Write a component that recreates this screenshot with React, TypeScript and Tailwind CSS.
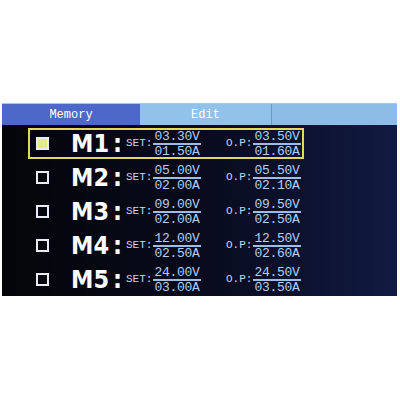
const ROWS = [
  { name: "M1", setV: "03.30V", setA: "01.50A", opV: "03.50V", opA: "01.60A", active: true },
  { name: "M2", setV: "05.00V", setA: "02.00A", opV: "05.50V", opA: "02.10A" },
  { name: "M3", setV: "09.00V", setA: "02.00A", opV: "09.50V", opA: "02.50A" },
  { name: "M4", setV: "12.00V", setA: "02.50A", opV: "12.50V", opA: "02.60A" },
  { name: "M5", setV: "24.00V", setA: "03.00A", opV: "24.50V", opA: "03.50A" },
];

const mono = { fontFamily: '"Liberation Mono", "DejaVu Sans Mono", monospace' };

function Fraction({ top, bottom }: { top: string; bottom: string }) {
  return (
    <div
      className="ml-[1px] flex w-[48px] flex-col items-center text-[13px] leading-[11px] tracking-[-0.3px] text-[#b4cef2]"
      style={mono}
    >
      <span>{top}</span>
      <span className="my-[1px] h-[2px] w-full bg-[#9dbce8]" />
      <span>{bottom}</span>
    </div>
  );
}

export default function App() {
  return (
    <div className="h-[400px] w-[400px] bg-white pt-[103px] pl-[2px]">
      <div className="flex h-[193px] w-[395px] flex-col bg-gradient-to-r from-[#040509] via-[#080b1c] to-[#111a42]">
        {/* tabs */}
        <div className="flex h-[22px] border-t border-[#a9c6ec] text-[12px] text-white" style={mono}>
          <div className="flex w-[138px] items-center justify-center bg-[#4d68c8]">Memory</div>
          <div className="flex w-[131px] items-center justify-center bg-[#92c2ea]">Edit</div>
          <div className="w-[1px] bg-[#6f98c8]" />
          <div className="flex-1 bg-[#8dbce6]" />
        </div>

        <div className="flex flex-col gap-[3px] pt-[3px] pl-[26px]">
          {ROWS.map((r) => (
            <div
              key={r.name}
              className={`flex h-[31px] w-[276px] items-center border-2 pl-[6px] ${r.active ? "border-[#dcdc5a]" : "border-transparent"}`}
            >
              <span
                className={`h-[13px] w-[13px] shrink-0 border-2 border-[#e8ecf8] ${r.active ? "bg-[#e4ec86]" : ""}`}
              />
              <span
                className="ml-[22px] w-[55px] shrink-0 text-[25px] leading-none font-bold text-white"
                style={{ fontFamily: '"DejaVu Sans Condensed", "DejaVu Sans", sans-serif', fontStretch: "condensed" }}
              >
                {r.name}
                <span className="ml-[4px]">:</span>
              </span>
              <span className="w-[26px] shrink-0 text-[11px] text-[#c8d6f0]" style={mono}>SET:</span>
              <Fraction top={r.setV} bottom={r.setA} />
              <span className="ml-[25px] w-[26px] shrink-0 text-[11px] text-[#c8d6f0]" style={mono}>O.P:</span>
              <Fraction top={r.opV} bottom={r.opA} />
            </div>
          ))}
        </div>
      </div>
    </div>
  );
}
